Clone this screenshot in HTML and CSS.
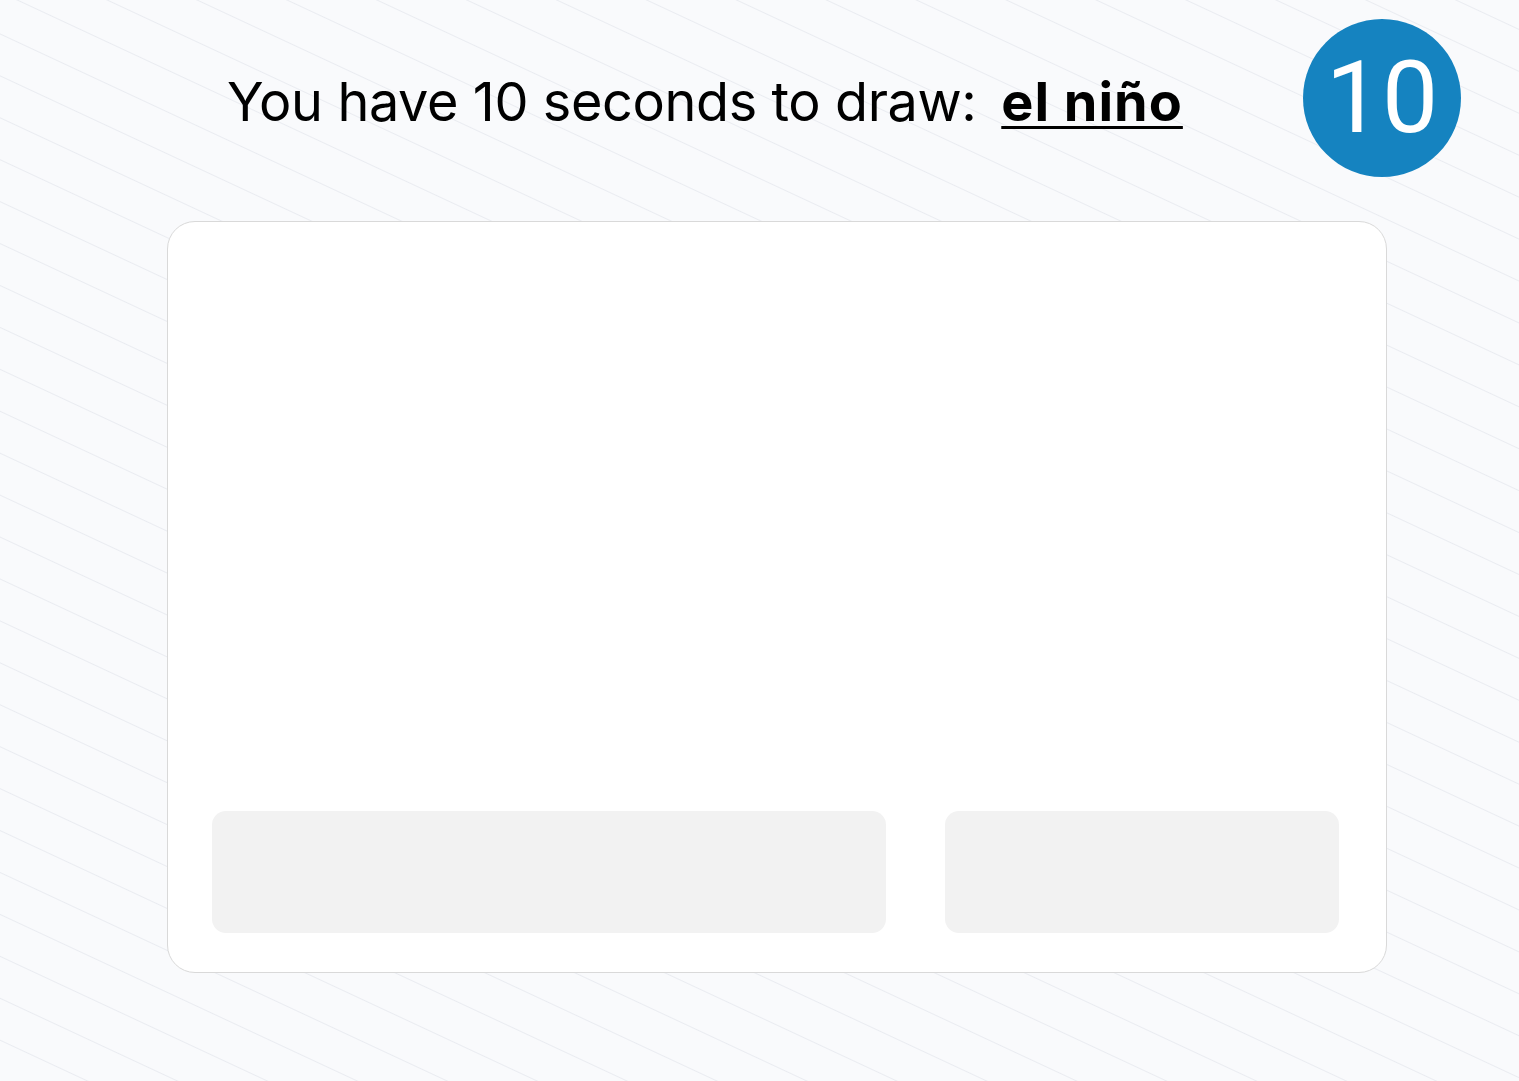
FILE: index.html
```html
<!DOCTYPE html>
<html lang="en">
<head>
<meta charset="utf-8">
<title>Draw</title>
<link rel="stylesheet" href="styles.css">
</head>
<body>
<div class="page">
  <header class="header">
    <h1 class="prompt">You have 10 seconds to draw: <span class="word">el niño</span></h1>
    <div class="timer">10</div>
  </header>
  <main class="board">
    <div class="canvas-area"></div>
    <div class="actions">
      <div class="slot slot-wide"></div>
      <div class="slot slot-narrow"></div>
    </div>
  </main>
</div>
</body>
</html>
```

FILE: styles.css
```css
html, body {
  margin: 0;
  padding: 0;
}

body {
  background-color: #f9fafc;
  background-image: repeating-linear-gradient(25deg, transparent 0, transparent 36px, #eaecf1 37px, transparent 38px);
  min-height: 1081px;
  font-family: Inter, "Noto Sans", sans-serif;
  color: #000;
}

.page {
  position: relative;
  padding-top: 19px;
}

.header {
  display: flex;
  align-items: center;
  height: 158px;
  padding-left: 227px;
}

.prompt {
  margin: 8px 0 0;
  font-size: 54px;
  font-weight: 400;
  line-height: 1;
  letter-spacing: -0.4px;
  white-space: nowrap;
}

.word {
  margin-left: 10px;
  font-weight: 700;
  letter-spacing: 1px;
  text-decoration: underline;
  text-decoration-thickness: 3px;
  text-underline-offset: 5px;
}

.timer {
  position: absolute;
  top: 19px;
  left: 1303px;
  width: 158px;
  height: 158px;
  border-radius: 50%;
  background: #1583c0;
  color: #fff;
  font-family: Roboto, sans-serif;
  font-size: 100px;
  line-height: 158px;
  text-align: center;
}

.board {
  margin: 44px 0 0 167px;
  background: #fff;
  border: 1px solid #d9d9d9;
  border-radius: 28px;
  display: flex;
  flex-direction: column;
  padding: 0 47px 39px 44px;
  box-sizing: content-box;
  width: 1127px;
  height: 711px;
}

.canvas-area {
  flex: 1;
}

.actions {
  display: flex;
  gap: 59px;
  height: 122px;
}

.slot {
  background: #f2f2f2;
  border-radius: 14px;
}

.slot-wide {
  width: 674px;
}

.slot-narrow {
  flex: 1;
}
```
